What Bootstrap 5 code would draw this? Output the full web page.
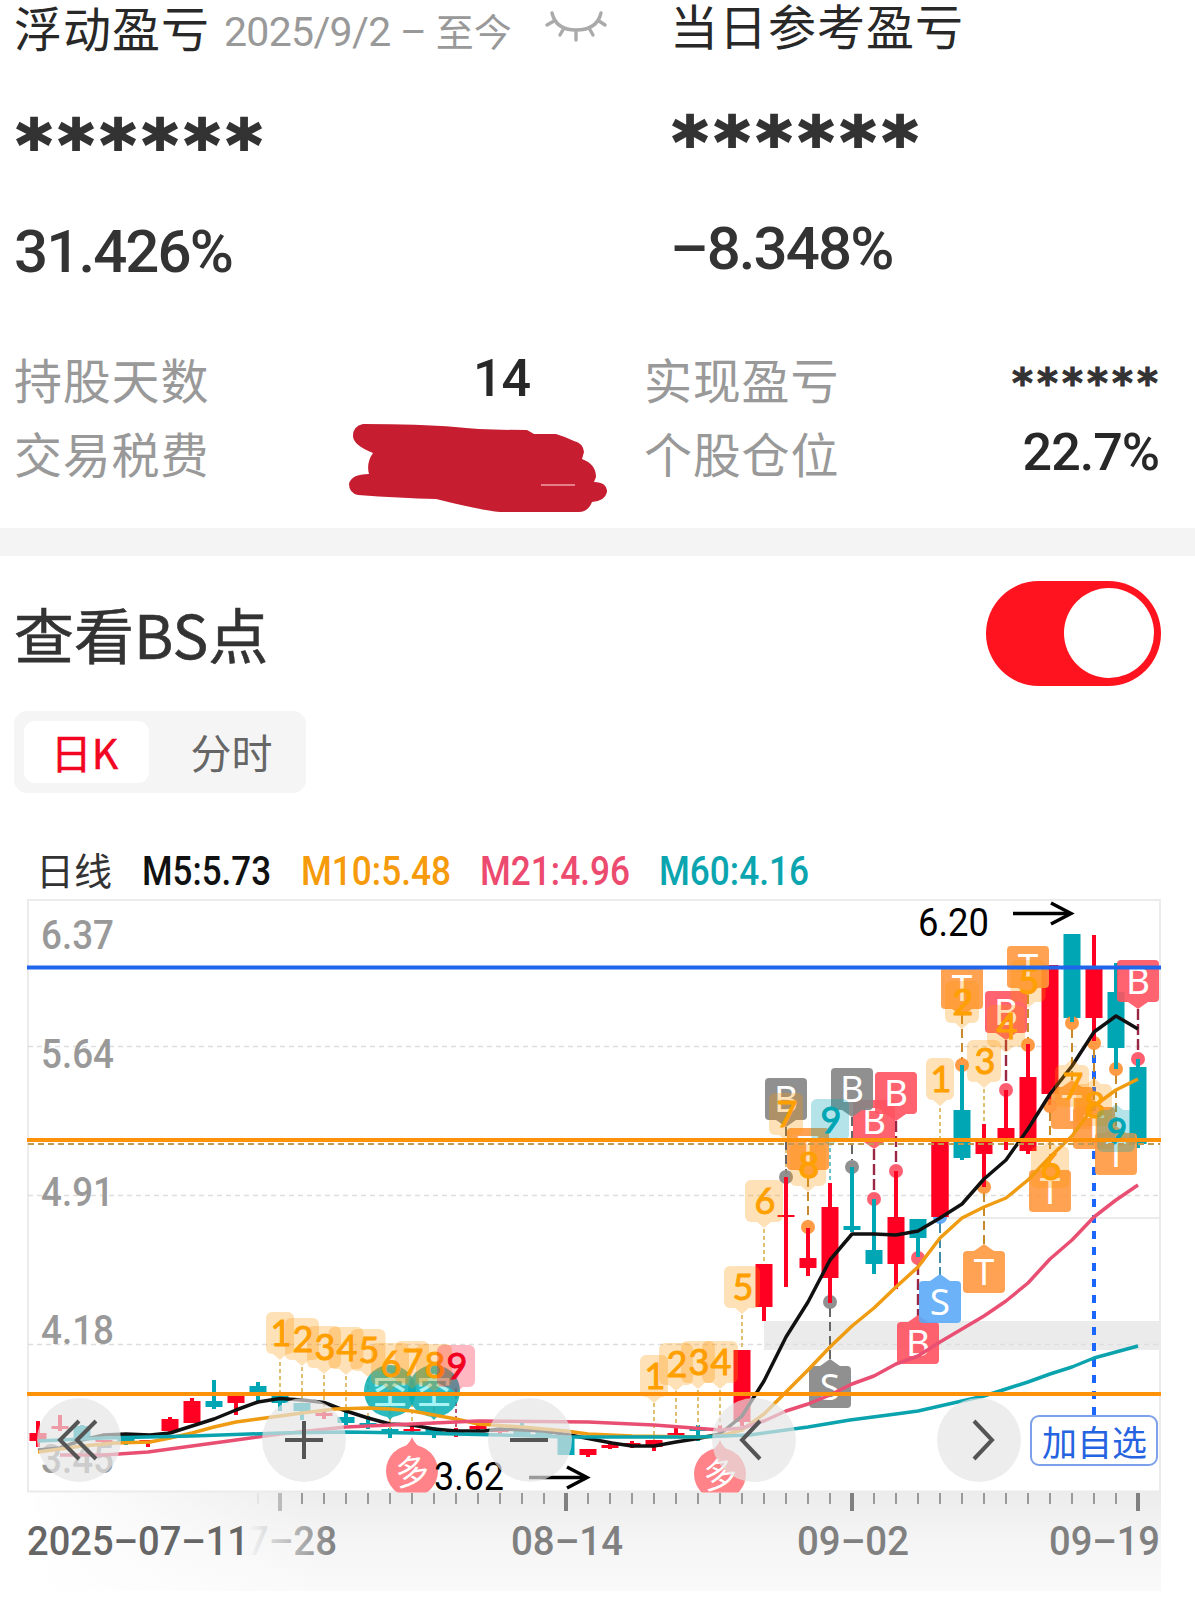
<!DOCTYPE html>
<html lang="zh-CN">
<head>
<meta charset="utf-8">
<meta name="viewport" content="width=device-width, initial-scale=1">
<title>个股盈亏</title>
<link rel="stylesheet" href="https://cdn.jsdelivr.net/npm/bootstrap@5.3.0/dist/css/bootstrap.min.css">
<style>
  body { width: 1195px; height: 1605px; overflow: hidden; background: #fff; color: #333; font-family: Roboto, "Noto Sans CJK SC", sans-serif; }
  .zh { font-family: "Noto Sans CJK SC", sans-serif; }
  .summary { height: 350px; padding-left: 14px; }
  .sum-left { width: 656px; }
  .sum-head { height: 53px; }
  .sum-title { font-size: 48px; line-height: 53px; letter-spacing: 1px; color: #282828; white-space: nowrap; }
  .sum-right .sum-title { line-height: 49px; }
  .sum-date { font-size: 41px; line-height: 60px; letter-spacing: -.7px; color: #999; margin-left: 14px; white-space: nowrap; }
  .sum-date .zh { font-size: 38px; letter-spacing: 0; }
  .eye { margin: 10px 0 0 32px; }
  .stars { font-family: "DejaVu Sans", sans-serif; font-weight: 700; font-size: 69px; line-height: 80px; letter-spacing: 5.9px; padding-left: 2px; margin-top: 52px; height: 80px; -webkit-text-stroke: 2px #333; }
  .sum-right .stars { margin-top: 53px; }
  .pct { font-size: 60px; font-weight: 500; line-height: 70px; letter-spacing: -1.9px; margin-top: 32px; }
  .sum-right .pct { margin-top: 32px; }
  .details { height: 178px; padding: 0 36px 0 14px; }
  .det-col { height: 74px; }
  .det-left { width: 630px; padding-right: 114px; }
  .det-name { font-size: 48px; line-height: 57px; letter-spacing: .8px; color: #999; }
  .det-num { font-size: 52px; font-weight: 500; line-height: 58px; letter-spacing: -1px; color: #282828; }
  .det-stars { font-family: "DejaVu Sans", sans-serif; font-weight: 700; font-size: 40px; line-height: 66px; letter-spacing: 4.1px; color: #333; margin-right: -3px; -webkit-text-stroke: 1px #333; }
  .scribble { margin-right: -78px; margin-top: -14px; }
  .divider { height: 28px; background: #f4f4f4; }
  .bs-head { height: 155px; padding: 25px 34px 0 14px; }
  .bs-title { font-size: 60px; line-height: 104px; -webkit-text-stroke: .6px #333; }
  .bs-knob { width: 90px; height: 90px; background: #fff; margin: 7px; }
  .bs-toggle { width: 175px; height: 105px; border-radius: 53px; background: #ff131e; }
  .tabs { width: 292px; height: 82px; margin-left: 14px; padding: 10px; background: #f5f5f5; border-radius: 13px; }
  .tabs .nav-link { width: 125px; height: 62px; padding: 0 4px 0 0; font-size: 41px; line-height: 61px; color: #666; border-radius: 11px; text-align: center; }
  .tabs .nav-link.active { background: #fff; color: #f20520; -webkit-text-stroke: .5px #f20520; }
  .tabs .nav-item + .nav-item { margin-left: 22px; }
  .legend { height: 56px; margin-top: 50px; padding-left: 36px; }
  .leg-name { width: 108px; font-size: 38px; line-height: 52px; white-space: nowrap; }
  .chart { height: 706px; }
  .ctl { position: absolute; top: 499px; width: 84px; height: 84px; padding: 0; border: 0; background: rgba(228,228,228,.68); }
  .ctl svg { display: block; }
  .c1 { left: 37px; } .c2 { left: 262px; } .c3 { left: 488px; } .c4 { left: 712px; } .c5 { left: 937px; }
  .add-fav { position: absolute; left: 1030px; top: 516px; width: 128px; height: 51px; padding: 0 0 0 1px; border: 2px solid #7da0ea; border-radius: 9px; background: #fff; color: #2563e0; font-size: 35px; line-height: 45px; }
</style>
</head>
<body>
<section class="summary d-flex">
  <div class="sum-left">
    <div class="sum-head d-flex align-items-start">
      <span class="sum-title zh">浮动盈亏</span>
      <span class="sum-date">2025/9/2 – <span class="zh">至今</span></span>
      <svg class="eye" width="64" height="34" viewBox="543 10 64 34" fill="none" stroke="#aaa" stroke-width="3.4" stroke-linecap="round"><path d="M551 13Q555 30 575 30Q596 30 600 13M553 21L546 25M563 28L559 35M575 31V40M588 28L592 35M598 21L604 25"/></svg>
    </div>
    <div class="stars">******</div>
    <div class="pct">31.426%</div>
  </div>
  <div class="sum-right">
    <div class="sum-title zh">当日参考盈亏</div>
    <div class="stars">******</div>
    <div class="pct">–8.348%</div>
  </div>
</section>
<section class="details d-flex">
  <div class="det-left">
    <div class="det-col d-flex justify-content-between"><span class="det-name zh">持股天数</span><span class="det-num">14</span></div>
    <div class="det-col d-flex justify-content-between"><span class="det-name zh">交易税费</span>
      <svg class="scribble flex-shrink-0" width="262" height="110" viewBox="346 410 262 110"><path fill="#c61e30" d="M363 424Q420 424 455 427Q480 430 527 430L534 434H556Q566 437 574 441Q583 443 584 452L582 459Q596 464 596 477L594 482Q607 482 607 492Q605 501 592 502Q588 512 579 512H500Q480 510 436 499Q400 498 358 495Q349 493 349 484Q351 474 369 474Q366 463 373 453Q353 445 353 436Q353 426 363 424Z"/><path d="M541 485H575" stroke="#f0a0a8" stroke-width="1.4"/></svg>
    </div>
  </div>
  <div class="flex-grow-1">
    <div class="det-col d-flex justify-content-between"><span class="det-name zh">实现盈亏</span><span class="det-stars">******</span></div>
    <div class="det-col d-flex justify-content-between"><span class="det-name zh">个股仓位</span><span class="det-num">22.7%</span></div>
  </div>
</section>
<div class="divider"></div>
<section class="bs-head d-flex justify-content-between align-items-start">
  <div class="bs-title zh">查看BS点</div>
  <div class="bs-toggle d-flex justify-content-end" role="switch" aria-checked="true"><span class="bs-knob rounded-circle"></span></div>
</section>
<ul class="nav tabs zh">
  <li class="nav-item"><a class="nav-link active" href="#">日K</a></li>
  <li class="nav-item"><a class="nav-link" href="#">分时</a></li>
</ul>
<div class="legend d-flex">
  <span class="leg-name zh">日线</span>
  <svg width="800" height="56" font-family="Roboto" font-weight="500" font-size="40">
    <text x="-2" y="42" fill="#111" textLength="129" lengthAdjust="spacingAndGlyphs">M5:5.73</text>
    <text x="157" y="42" fill="#f59b0c" textLength="150" lengthAdjust="spacingAndGlyphs">M10:5.48</text>
    <text x="336" y="42" fill="#ec4a6e" textLength="150" lengthAdjust="spacingAndGlyphs">M21:4.96</text>
    <text x="515" y="42" fill="#0ba5b0" textLength="150" lengthAdjust="spacingAndGlyphs">M60:4.16</text>
  </svg>
</div>
<section class="chart position-relative">
  <svg id="kline" class="d-block" width="1195" height="706" viewBox="0 899 1195 706" font-family="Roboto"></svg>
  <button class="ctl c1 rounded-circle"><svg width="84" height="84" fill="none" stroke="#555" stroke-width="4"><path d="M42 23L23 42L42 61M59 23L40 42L59 61"/></svg></button>
  <button class="ctl c2 rounded-circle"><svg width="84" height="84" stroke="#555" stroke-width="4"><path d="M23 42H61M42 23V61"/></svg></button>
  <button class="ctl c3 rounded-circle"><svg width="84" height="84" stroke="#555" stroke-width="4"><path d="M22 42H60"/></svg></button>
  <button class="ctl c4 rounded-circle"><svg width="84" height="84" fill="none" stroke="#555" stroke-width="4"><path d="M48 23L30 42L48 61"/></svg></button>
  <button class="ctl c5 rounded-circle"><svg width="84" height="84" fill="none" stroke="#555" stroke-width="4"><path d="M37 23L55 42L37 61"/></svg></button>
  <button class="add-fav zh">加自选</button>
</section>
<script>
const RED = '#ff0022', TEAL = '#00a6b4', ORANGE = '#ff9500';
const X = i => 38 + 22 * i;
let out = '';
const add = s => { out += s; };
const line = (x1, y1, x2, y2, c, w, extra = '') => add(`<path d="M${x1} ${y1}L${x2} ${y2}" stroke="${c}" stroke-width="${w}" fill="none" ${extra}/>`);
const label = (x, y, w, t, c, size = 41, weight = 500, extra = '') => add(`<text x="${x}" y="${y}" font-size="${size}" font-weight="${weight}" fill="${c}" textLength="${w}" lengthAdjust="spacingAndGlyphs" ${extra}>${t}</text>`);

// date strip, frame and grid
add(`<defs><linearGradient id="strip" x2="0" y2="1"><stop offset="0" stop-color="#ececec"/><stop offset=".5" stop-color="#f5f5f5"/><stop offset="1" stop-color="#fafafa"/></linearGradient>
<linearGradient id="fade"><stop offset="0" stop-color="#fff"/><stop offset="1" stop-color="#fff" stop-opacity="0"/></linearGradient>
<linearGradient id="txt" gradientUnits="userSpaceOnUse" x1="250" x2="335" y1="0" y2="0"><stop offset="0" stop-color="#f4f4f4"/><stop offset="1" stop-color="#808080"/></linearGradient>
<clipPath id="plot"><path d="M27 899H1162V1492.500H27Z"/></clipPath><clipPath id="after"><path d="M250 1500H400V1600H250Z"/></clipPath></defs>
<path d="M27 1492H1161V1591H27Z" fill="url(#strip)"/><path d="M27 1492H330V1591H27Z" fill="url(#fade)"/>
<path d="M764 1321H1161V1350H764Z" fill="#ebebeb"/>
<path d="M28 900H1160V1491.500H28Z" fill="none" stroke="#ebebeb" stroke-width="2"/>`);
[1046.5, 1195.5, 1344.5].forEach(y => line(28, y, 1160, y, '#dedede', 1.3, 'stroke-dasharray="5 4"'));
line(940, 1218, 1160, 1218, '#e4e4e4', 1.6);
[['6.37', 949], ['5.64', 1068], ['4.91', 1206], ['4.18', 1344], ['3.45', 1473]].forEach(a => label(41, a[1], 73, a[0], '#999'));

// [colour, body top, body bottom, wick top, wick bottom]
const candles = [
 'r 1433 1441 1421 1447','r 1426 1429 1415 1431','t 1426 1438 1425 1440','r 1440 1442 1440 1444','t 1438 1444 1437 1445','r 1440 1442 1440 1447',
 'r 1419 1431 1417 1432','r 1401 1423 1398 1423','t 1401 1407 1380 1409','r 1396 1403 1394 1415','t 1386 1393 1382 1401','t 1396 1403 1395 1411',
 't 1403 1411 1403 1420','r 1413 1416 1410 1419','t 1417 1423 1411 1425','t 1423 1426 1416 1429','t 1429 1432 1428 1438','r 1429 1431 1425 1433',
 't 1429 1432 1427 1438','r 1431 1433 1428 1437','r 1426 1429 1424 1431','r 1430 1432 1429 1434','t 1431 1434 1423 1436','t 1431 1437 1430 1438',
 't 1437 1455 1436 1455','r 1449 1455 1449 1457','r 1445 1448 1443 1449','r 1443 1446 1441 1448','r 1440 1447 1440 1451','r 1433 1436 1427 1437',
 't 1429 1431 1425 1441','r 1429 1431 1425 1434','r 1350 1422 1350 1426','r 1264 1307 1264 1321','r 1215 1217 1177 1287','r 1258 1268 1228 1276',
 'r 1207 1278 1183 1303','t 1226 1230 1167 1232','t 1250 1264 1199 1274','r 1217 1264 1171 1289','t 1219 1238 1219 1257','r 1141 1217 1141 1217',
 't 1110 1158 1065 1160','r 1142 1154 1124 1187','r 1128 1138 1090 1150','r 1077 1151 1044 1154','r 965 1094 965 1105','t 934 1018 934 1022',
 'r 967 1018 935 1041','t 992 1048 963 1069','t 1067 1144 1059 1148'];
line(1094, 1055, 1094, 1415, '#1a66ff', 4, 'stroke-dasharray="8 8"');
candles.forEach((s, i) => {
  const [k, a, b, c, d] = s.split(' '), col = k === 'r' ? RED : TEAL;
  add(`<path fill="${col}" d="M${X(i) - 8.5} ${a}h17V${b}h-17ZM${X(i) - 2} ${c}h4V${d}h-4Z"/>`);
});

// connectors between a candle and its badge
const conn = (i, a, b, c, dash = '9 5', w = 2) => line(X(i), a, X(i), b, c, w, `stroke-dasharray="${dash}"`);
[[11,1362,1394],[12,1367,1403],[13,1375,1410],[14,1376,1411],[15,1378,1416],[16,1390,1429],[17,1389,1426],[18,1393,1428],[28,1403,1440],[29,1391,1428],[30,1390,1426],[31,1390,1426],[32,1315,1350],[33,1229,1264],[34,1142,1178],[41,1108,1141],[43,1089,1124]].forEach(a => conn(a[0], a[1], a[2], '#e0c070', '4 3', 2));
conn(19, 1388, 1436, '#c05070', '4 3', 2); conn(36, 1148, 1183, '#6cc4c8', '4 3', 2);
[[34,1127,1170],[37,1117,1160],[36,1308,1360]].forEach(a => conn(...a, '#666'));
[[38,1149,1192],[39,1121,1164],[40,1264,1316],[44,1040,1084],[50,1009,1054]].forEach(a => conn(...a, '#9a2844', '11 4', 2.4));
[[35,1178,1221],[42,1015,1060],[43,1193,1245],[45,995,1039],[46,1112,1163],[47,1029,1080],[48,1049,1100],[49,1075,1126]].forEach(a => conn(...a, '#c78a2a'));
conn(41, 1222, 1275, '#3f8cab', '11 4');

const dot = (i, y, c) => add(`<circle cx="${X(i)}" cy="${y}" r="7" fill="${c}" opacity=".85"/>`);
[[34,1177],[37,1167],[36,1302]].forEach(a => dot(...a, '#7c7c7c'));
[[35,1227],[42,1065],[43,1187],[45,1045],[46,1106],[47,1023],[48,1043],[49,1069]].forEach(a => dot(...a, '#ff8a24'));
[[38,1199],[39,1171],[40,1258],[44,1090],[50,1059]].forEach(a => dot(...a, '#ff4458'));
dot(41, 1217, '#4b9ff5');
candles.forEach((s, i) => { if (i > 33 && i < 46 && i !== 41 || i > 46) { const [k, , , c, d] = s.split(' '); line(X(i), c, X(i), d, k === 'r' ? RED : TEAL, 4); } });
add(`<path d="M931.500 1141h17V1217h-17Z" fill="${RED}"/>`);

// trade badges: index, box top, pointer direction, letter, colour
const G = '#858585', P = '#ff5360', O = '#ff9840', B = '#5baaf8';
[[34,1078,1,'B',G],[38,1100,1,'B',P],[37,1068,1,'B',G],[39,1072,1,'B',P],[35,1128,1,'T',O],[36,1366,0,'S',G],[40,1322,0,'B',P],[41,1281,0,'S',B],
 [43,1251,0,'T',O],[42,967,1,'T',O],[44,991,1,'B',P],[45,946,1,'T',O],[46,1170,0,'T',O],[47,1087,0,'T',O],[48,1107,0,'T',O],[49,1133,0,'T',O],[50,960,1,'B',P]].forEach(([i, y, down, t, c]) => {
  const x = X(i), p = down ? `M${x - 10} ${y + 42}h20l-10 7Z` : `M${x - 10} ${y}h20l-10 -7Z`;
  add(`<g opacity=".9"><rect x="${x - 21}" y="${y}" width="42" height="42" rx="4" fill="${c}"/><path d="${p}" fill="${c}"/></g><text x="${x}" y="${y + 34}" font-family="Noto Sans" font-size="37" fill="#fff" text-anchor="middle">${t}</text>`);
});

// sell / buy markers of the strategy
[390, 434].forEach(x => add(`<g opacity=".85"><circle cx="${x}" cy="1391" r="26" fill="#08aeb4"/><path d="M${x - 18} 1409h36q-12 4 -18 11q-6 -7 -18 -11Z" fill="#08aeb4"/></g><text x="${x}" y="1404" text-anchor="middle" font-family="Noto Sans CJK SC" font-size="35" font-weight="500" fill="#a8f4f4">空</text>`));
[[412, 1471], [720, 1474]].forEach(([x, y]) => add(`<g clip-path="url(#plot)"><circle cx="${x}" cy="${y}" r="26" fill="#ff8388"/><path d="M${x - 13} ${y - 22}Q${x - 3} ${y - 25} ${x} ${y - 34}Q${x + 3} ${y - 25} ${x + 13} ${y - 22}Z" fill="#ff8388"/><text x="${x}" y="${y + 13}" text-anchor="middle" font-family="Noto Sans CJK SC" font-size="34" fill="#fff" transform="rotate(-8 ${x} ${y})">多</text></g>`));

// moving averages
const ma = (c, pts) => add(`<polyline points="${pts}" fill="none" stroke="${c}" stroke-width="3.500" stroke-linejoin="round"/>`);
ma('#111', '38,1450 60,1448 82,1440 104,1435 126,1434 150,1435 170,1433 192,1426 214,1419 236,1410 258,1402 280,1398.5 302,1400 324,1402.5 346,1411 368,1418 390,1424 412,1425 434,1429 456,1431 484,1431 500,1429 544,1431 570,1435 596,1440 612,1443 632,1446 654,1446 676,1442 698,1438.5 720,1434 742,1416 764,1381 786,1337 808,1302 830,1260 852,1234 874,1234 896,1235 918,1231 940,1218 962,1204 984,1179 1006,1160 1028,1129 1050,1094 1072,1066 1094,1032 1116,1016 1138,1029');
ma('#f09c12', '38,1452 82,1446 115,1443 150,1442 170,1438 192,1433 214,1427 236,1422 258,1419 280,1416 302,1413 335,1409 368,1408 390,1409 412,1411 434,1415 456,1419 478,1424 522,1427 566,1431 588,1434 632,1436 698,1437 720,1436 742,1430 764,1414 786,1392 808,1370 830,1347 852,1326 874,1308 896,1287 918,1267 940,1238 962,1218 984,1207 1006,1198 1028,1180 1050,1157 1072,1136 1094,1106 1116,1090 1138,1079');
ma('#e94f72', '60,1455 104,1455 148,1452 192,1446 236,1440 280,1434 346,1427 412,1424 478,1421 588,1422 654,1425 720,1430 742,1428 764,1421 786,1411 808,1404 830,1395 852,1384 874,1376 896,1364 918,1356 940,1342 962,1329 984,1316 1006,1301 1028,1283 1050,1259 1072,1240 1094,1217 1116,1200 1138,1185');
ma('#0aa3ae', '38,1441 104,1438 192,1436 280,1433 346,1432 412,1433 500,1435 566,1437 698,1437 750,1435 808,1427 850,1420 896,1414 918,1411 940,1406 984,1396 1006,1389 1028,1382 1050,1374 1072,1367 1094,1358 1138,1346');

// sequence counters: index, top, digit, width, pointer up
[[11,1312,1,28],[12,1318,2,34],[13,1326,3,34],[14,1327,4,35],[15,1329,5,35],[16,1343,6,38],[17,1341,7,34],[18,1344,8,36],[19,1345,9,38],
 [28,1355,1,28],[29,1343,2,34],[30,1341,3,34],[31,1341,4,36],[32,1266,5,36],[33,1180,6,38],[34,1093,7,34],[35,1144,8,36],[36,1099,9,38],
 [41,1058,1,28],[42,981,2,34],[43,1040,3,34],[44,1005,4,38],[45,960,5,35],[46,1146,6,38,1],[47,1065,7,34,1],[48,1084,8,36,1],[49,1110,9,38,1]].forEach(([i, y, t, w, up]) => {
  const x = X(i), bg = t === 9 ? (i === 19 ? '#ff1030' : TEAL) : ORANGE, fg = t === 9 ? (i === 19 ? '#f2001f' : TEAL) : '#ffa000', h = 42, r = 6;
  const tri = up ? `M${x - 7} ${y}h14l-7 -6Z` : `M${x - 7} ${y + h}h14l-7 6Z`;
  add(`<g opacity="${t === 9 ? .29 : .28}"><rect x="${x - w / 2}" y="${y}" width="${w}" height="${h}" rx="${r}" fill="${bg}"/><path d="${tri}" fill="${bg}"/></g><text x="${x + 1}" y="${y + 34}" font-family="Lato, Roboto" font-size="36" fill="${fg}" stroke="${fg}" stroke-width="1" text-anchor="middle">${t}</text>`);
});

// price levels
line(28, 1144, 1160, 1144, '#c09a50', 1.8, 'stroke-dasharray="6 4"');
line(27, 1140, 1161, 1140, '#ff9208', 4);
line(27, 1394, 1161, 1394, '#ff9208', 4);
line(27, 967.5, 1161, 967.5, '#1f66ea', 3.8);

// extremes
label(918, 936, 71, '6.20', '#000', 38, 400);
line(1013, 913.5, 1070, 913.5, '#000', 3.5); add('<path d="M1051 903L1071 913.500L1051 924" fill="none" stroke="#000" stroke-width="3.500"/>');
label(434, 1490, 70, '3.62', '#000', 38, 400);
line(529, 1477.5, 586, 1477.5, '#000', 3.5); add('<path d="M567 1467L587 1477.500L567 1488" fill="none" stroke="#000" stroke-width="3.500"/>');

// time axis
for (let i = 10; i <= 50; i++) {
  const big = i % 13 === 11;
  line(X(i), 1493, X(i), big ? 1511 : 1504, i === 10 ? '#e4e4e4' : i === 11 ? '#bbb' : big ? '#808080' : '#999', big ? 4 : 2);
}
label(27, 1555, 222, '2025–07–11', '#666');
label(225, 1555, 112, '07–28', 'url(#txt)', 41, 500, 'clip-path="url(#after)"');
label(511, 1555, 112, '08–14', '#808080');
label(797, 1555, 112, '09–02', '#808080');
label(1049, 1555, 111, '09–19', '#808080');
document.getElementById('kline').innerHTML = out;
</script>
<script src="https://cdn.jsdelivr.net/npm/bootstrap@5.3.0/dist/js/bootstrap.bundle.min.js"></script>
</body>
</html>
